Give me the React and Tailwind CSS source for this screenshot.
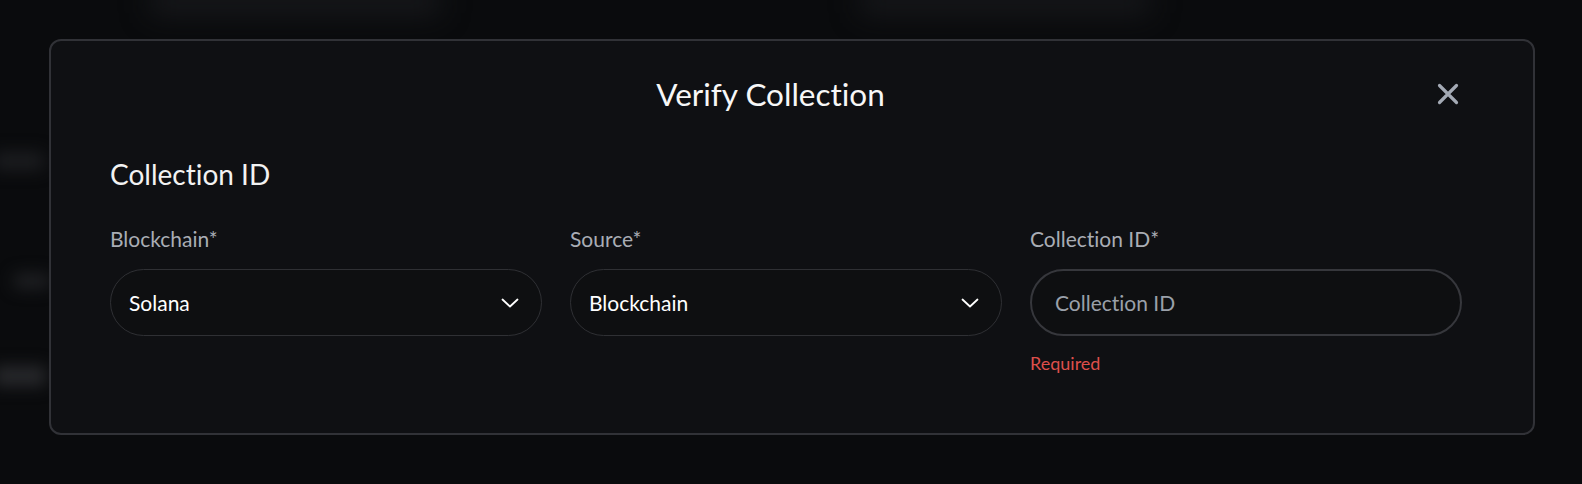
import React from "react";

const font = { fontFamily: "Lato, 'Noto Sans', sans-serif" };

function Chevron() {
  return (
    <svg width="18" height="10" viewBox="0 0 18 10" fill="none">
      <polyline points="1.5,1.5 9,8.5 16.5,1.5" stroke="#ffffff" strokeWidth="1.8" strokeLinecap="round" strokeLinejoin="round" />
    </svg>
  );
}

function CloseIcon() {
  return (
    <svg width="22" height="22" viewBox="0 0 22 22" fill="none">
      <path d="M2.5 2.5 L19.5 19.5 M19.5 2.5 L2.5 19.5" stroke="#a4aab5" strokeWidth="3.2" strokeLinecap="round" />
    </svg>
  );
}

function SelectField({ label, value }) {
  return (
    <div className="flex flex-col">
      <div className="text-[21px] leading-[24px] text-[#a9adb5]">{label}</div>
      <div className="mt-[18px] h-[67px] rounded-full border border-[#2f3034] bg-[#0e0f11] pl-[18px] pr-[22px] flex items-center justify-between">
        <span className="text-[21px] text-white">{value}</span>
        <Chevron />
      </div>
    </div>
  );
}

export default function App() {
  return (
    <div className="relative w-full h-[484px] overflow-hidden bg-[#0a0b0d] [font-variant-ligatures:none]" style={font}>
      {/* blurred page content behind the overlay */}
      <div className="absolute left-[150px] top-[-12px] w-[290px] h-[26px] rounded bg-[#18191c] blur-[14px]" />
      <div className="absolute left-[860px] top-[-12px] w-[290px] h-[26px] rounded bg-[#17181b] blur-[14px]" />
      <div className="absolute left-[-6px] top-[152px] w-[50px] h-[18px] rounded bg-[#1c1d20] blur-[8px]" />
      <div className="absolute left-[14px] top-[274px] w-[36px] h-[14px] rounded bg-[#212225] blur-[8px]" />
      <div className="absolute left-[-6px] top-[366px] w-[52px] h-[20px] rounded bg-[#28292c] blur-[8px]" />

      <div className="relative pt-[39px] pl-[49px]">
        <div className="w-[1486px] h-[396px] rounded-[12px] border-2 border-[#313237] bg-[#0f1013] pt-[35px] pl-[59px] pr-[70px]">
          <div className="flex items-center w-[1355px] h-[36px]">
            <h2 className="flex-1 text-center text-[31.5px] leading-[36px] text-[#f7f7f7] font-normal">Verify Collection</h2>
            <button className="w-[34px] h-[34px] flex items-center justify-center">
              <CloseIcon />
            </button>
          </div>

          <div className="mt-[46px] text-[28px] leading-[32px] text-[#f2f2f2]">Collection ID</div>

          <div className="mt-[37px] grid grid-cols-[432px_432px_432px] gap-x-[28px]">
            <SelectField label="Blockchain*" value="Solana" />
            <SelectField label="Source*" value="Blockchain" />
            <div className="flex flex-col">
              <div className="text-[21px] leading-[24px] text-[#a9adb5]">Collection ID*</div>
              <div className="mt-[18px] h-[67px] rounded-full border-2 border-[#36373c] bg-[#0e0f11] pl-[23px] flex items-center">
                <span className="text-[21px] text-[#9aa0aa]">Collection ID</span>
              </div>
              <div className="mt-[17px] text-[18px] leading-[20px] text-[#de4f4b]">Required</div>
            </div>
          </div>
        </div>
      </div>
    </div>
  );
}
